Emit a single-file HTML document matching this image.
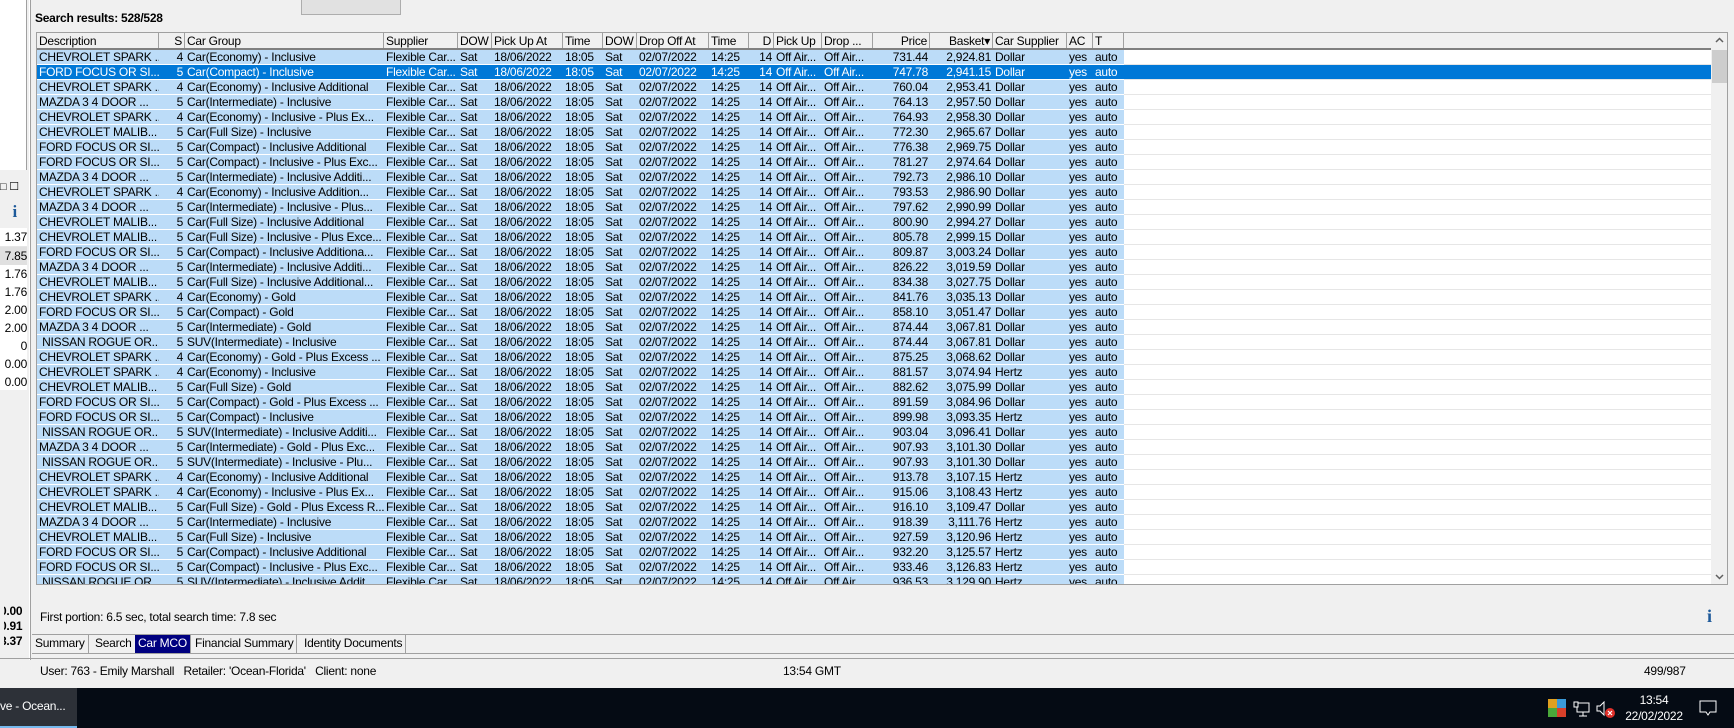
<!DOCTYPE html>
<html><head><meta charset="utf-8"><style>
*{margin:0;padding:0;box-sizing:border-box}
body{width:1734px;height:728px;overflow:hidden;background:#f0f0f0;font-family:"Liberation Sans",sans-serif;font-size:12px;color:#000;position:relative;letter-spacing:-0.25px}
.abs{position:absolute}
#grid{position:absolute;left:36px;top:32px;width:1692px;height:553px;background:#fff;border:1px solid #a0a0a0;overflow:hidden}
.h{display:flex;height:17px;background:#f0f0f0;border-bottom:2px solid #808080;width:1674px}
.h span{border-right:1px solid #a0a0a0;padding:1px 2px 0 2px;white-space:nowrap;overflow:hidden;line-height:14px}
.r{display:flex;height:15px;border-bottom:1px solid #fff;width:1674px;background:linear-gradient(to right,#bcdcf8 0 1087px,#fff 1087px);line-height:14px;position:relative}
.r::after{content:"";position:absolute;left:1087px;right:0;bottom:-1px;height:1px;background:#e6e6e6}
.r.s{background:#0078d7;color:#fff}
.r span{padding:0 2px;white-space:nowrap;overflow:hidden}
.h span:nth-child(1),.r span:nth-child(1){width:122px}
.h span:nth-child(2),.r span:nth-child(2){width:26px;text-align:right}
.h span:nth-child(3),.r span:nth-child(3){width:199px}
.h span:nth-child(4),.r span:nth-child(4){width:74px}
.h span:nth-child(5),.r span:nth-child(5){width:34px}
.h span:nth-child(6),.r span:nth-child(6){width:71px}
.h span:nth-child(7),.r span:nth-child(7){width:40px}
.h span:nth-child(8),.r span:nth-child(8){width:34px}
.h span:nth-child(9),.r span:nth-child(9){width:72px}
.h span:nth-child(10),.r span:nth-child(10){width:40px}
.h span:nth-child(11),.r span:nth-child(11){width:25px;text-align:right}
.h span:nth-child(12),.r span:nth-child(12){width:48px}
.h span:nth-child(13),.r span:nth-child(13){width:51px}
.h span:nth-child(14),.r span:nth-child(14){width:57px;text-align:right}
.h span:nth-child(15),.r span:nth-child(15){width:63px;text-align:right}
.h span:nth-child(16),.r span:nth-child(16){width:74px}
.h span:nth-child(17),.r span:nth-child(17){width:26px}
.h span:nth-child(18),.r span:nth-child(18){width:31px}
#sb{position:absolute;left:1674px;top:0;width:17px;height:553px;background:#f0f0f0}
.tab{position:absolute;top:635px;height:18px;line-height:17px;padding:0 3px;border-right:1px solid #a0a0a0}
</style></head><body>
<div class="abs" style="left:0;top:0;width:27px;height:170px;background:#fff;border-right:1px solid #a0a0a0"></div>
<div class="abs" style="left:29px;top:0;width:2px;height:660px;border-left:1px solid #fff;border-right:1px solid #a0a0a0"></div>
<div class="abs" style="left:0;top:180px;width:27px;height:18px;font-size:11px">&#9633;&nbsp;&#9744;</div>
<div class="abs" style="left:0;top:202px;width:27px;height:20px;text-align:right;padding-right:10px;font-family:'Liberation Serif',serif;font-weight:bold;color:#1e5a9a;font-size:17px">i</div>
<div class="abs" style="left:0;top:228px;width:27px;height:162px;background:#fff;text-align:right;line-height:18px;padding-top:0">
<div style="border-bottom:1px solid #e6e6e6">1.37</div><div style="background:#e0e0e0">7.85</div><div>1.76</div><div>1.76</div><div>2.00</div><div>2.00</div><div>0</div><div>0.00</div><div>0.00</div></div>
<div class="abs" style="left:0;top:604px;width:18px;text-align:right;font-weight:bold;line-height:15px">0.00<br>0.91<br>3.37</div>
<div class="abs" style="left:0;top:604px;width:4px;height:46px;background:#f0f0f0"></div>
<div class="abs" style="left:301px;top:0;width:100px;height:15px;border:1px solid #adadad;border-top:none;background:#e1e1e1"></div>
<div class="abs" style="left:35px;top:11px;font-weight:bold">Search results: 528/528</div>
<div id="grid">
<div class="h"><span>Description</span><span>S</span><span>Car Group</span><span>Supplier</span><span>DOW</span><span>Pick Up At</span><span>Time</span><span>DOW</span><span>Drop Off At</span><span>Time</span><span>D</span><span>Pick Up</span><span>Drop ...</span><span>Price</span><span>Basket&#9662;</span><span>Car Supplier</span><span>AC</span><span>T</span></div>
<div class="r"><span>CHEVROLET SPARK ...</span><span>4</span><span>Car(Economy) - Inclusive</span><span>Flexible Car...</span><span>Sat</span><span>18/06/2022</span><span>18:05</span><span>Sat</span><span>02/07/2022</span><span>14:25</span><span>14</span><span>Off Air...</span><span>Off Air...</span><span>731.44</span><span>2,924.81</span><span>Dollar</span><span>yes</span><span>auto</span></div>
<div class="r s"><span>FORD FOCUS OR SI...</span><span>5</span><span>Car(Compact) - Inclusive</span><span>Flexible Car...</span><span>Sat</span><span>18/06/2022</span><span>18:05</span><span>Sat</span><span>02/07/2022</span><span>14:25</span><span>14</span><span>Off Air...</span><span>Off Air...</span><span>747.78</span><span>2,941.15</span><span>Dollar</span><span>yes</span><span>auto</span></div>
<div class="r"><span>CHEVROLET SPARK ...</span><span>4</span><span>Car(Economy) - Inclusive Additional</span><span>Flexible Car...</span><span>Sat</span><span>18/06/2022</span><span>18:05</span><span>Sat</span><span>02/07/2022</span><span>14:25</span><span>14</span><span>Off Air...</span><span>Off Air...</span><span>760.04</span><span>2,953.41</span><span>Dollar</span><span>yes</span><span>auto</span></div>
<div class="r"><span>MAZDA 3 4 DOOR ...</span><span>5</span><span>Car(Intermediate) - Inclusive</span><span>Flexible Car...</span><span>Sat</span><span>18/06/2022</span><span>18:05</span><span>Sat</span><span>02/07/2022</span><span>14:25</span><span>14</span><span>Off Air...</span><span>Off Air...</span><span>764.13</span><span>2,957.50</span><span>Dollar</span><span>yes</span><span>auto</span></div>
<div class="r"><span>CHEVROLET SPARK ...</span><span>4</span><span>Car(Economy) - Inclusive - Plus Ex...</span><span>Flexible Car...</span><span>Sat</span><span>18/06/2022</span><span>18:05</span><span>Sat</span><span>02/07/2022</span><span>14:25</span><span>14</span><span>Off Air...</span><span>Off Air...</span><span>764.93</span><span>2,958.30</span><span>Dollar</span><span>yes</span><span>auto</span></div>
<div class="r"><span>CHEVROLET MALIB...</span><span>5</span><span>Car(Full Size) - Inclusive</span><span>Flexible Car...</span><span>Sat</span><span>18/06/2022</span><span>18:05</span><span>Sat</span><span>02/07/2022</span><span>14:25</span><span>14</span><span>Off Air...</span><span>Off Air...</span><span>772.30</span><span>2,965.67</span><span>Dollar</span><span>yes</span><span>auto</span></div>
<div class="r"><span>FORD FOCUS OR SI...</span><span>5</span><span>Car(Compact) - Inclusive Additional</span><span>Flexible Car...</span><span>Sat</span><span>18/06/2022</span><span>18:05</span><span>Sat</span><span>02/07/2022</span><span>14:25</span><span>14</span><span>Off Air...</span><span>Off Air...</span><span>776.38</span><span>2,969.75</span><span>Dollar</span><span>yes</span><span>auto</span></div>
<div class="r"><span>FORD FOCUS OR SI...</span><span>5</span><span>Car(Compact) - Inclusive - Plus Exc...</span><span>Flexible Car...</span><span>Sat</span><span>18/06/2022</span><span>18:05</span><span>Sat</span><span>02/07/2022</span><span>14:25</span><span>14</span><span>Off Air...</span><span>Off Air...</span><span>781.27</span><span>2,974.64</span><span>Dollar</span><span>yes</span><span>auto</span></div>
<div class="r"><span>MAZDA 3 4 DOOR ...</span><span>5</span><span>Car(Intermediate) - Inclusive Additi...</span><span>Flexible Car...</span><span>Sat</span><span>18/06/2022</span><span>18:05</span><span>Sat</span><span>02/07/2022</span><span>14:25</span><span>14</span><span>Off Air...</span><span>Off Air...</span><span>792.73</span><span>2,986.10</span><span>Dollar</span><span>yes</span><span>auto</span></div>
<div class="r"><span>CHEVROLET SPARK ...</span><span>4</span><span>Car(Economy) - Inclusive Addition...</span><span>Flexible Car...</span><span>Sat</span><span>18/06/2022</span><span>18:05</span><span>Sat</span><span>02/07/2022</span><span>14:25</span><span>14</span><span>Off Air...</span><span>Off Air...</span><span>793.53</span><span>2,986.90</span><span>Dollar</span><span>yes</span><span>auto</span></div>
<div class="r"><span>MAZDA 3 4 DOOR ...</span><span>5</span><span>Car(Intermediate) - Inclusive - Plus...</span><span>Flexible Car...</span><span>Sat</span><span>18/06/2022</span><span>18:05</span><span>Sat</span><span>02/07/2022</span><span>14:25</span><span>14</span><span>Off Air...</span><span>Off Air...</span><span>797.62</span><span>2,990.99</span><span>Dollar</span><span>yes</span><span>auto</span></div>
<div class="r"><span>CHEVROLET MALIB...</span><span>5</span><span>Car(Full Size) - Inclusive Additional</span><span>Flexible Car...</span><span>Sat</span><span>18/06/2022</span><span>18:05</span><span>Sat</span><span>02/07/2022</span><span>14:25</span><span>14</span><span>Off Air...</span><span>Off Air...</span><span>800.90</span><span>2,994.27</span><span>Dollar</span><span>yes</span><span>auto</span></div>
<div class="r"><span>CHEVROLET MALIB...</span><span>5</span><span>Car(Full Size) - Inclusive - Plus Exce...</span><span>Flexible Car...</span><span>Sat</span><span>18/06/2022</span><span>18:05</span><span>Sat</span><span>02/07/2022</span><span>14:25</span><span>14</span><span>Off Air...</span><span>Off Air...</span><span>805.78</span><span>2,999.15</span><span>Dollar</span><span>yes</span><span>auto</span></div>
<div class="r"><span>FORD FOCUS OR SI...</span><span>5</span><span>Car(Compact) - Inclusive Additiona...</span><span>Flexible Car...</span><span>Sat</span><span>18/06/2022</span><span>18:05</span><span>Sat</span><span>02/07/2022</span><span>14:25</span><span>14</span><span>Off Air...</span><span>Off Air...</span><span>809.87</span><span>3,003.24</span><span>Dollar</span><span>yes</span><span>auto</span></div>
<div class="r"><span>MAZDA 3 4 DOOR ...</span><span>5</span><span>Car(Intermediate) - Inclusive Additi...</span><span>Flexible Car...</span><span>Sat</span><span>18/06/2022</span><span>18:05</span><span>Sat</span><span>02/07/2022</span><span>14:25</span><span>14</span><span>Off Air...</span><span>Off Air...</span><span>826.22</span><span>3,019.59</span><span>Dollar</span><span>yes</span><span>auto</span></div>
<div class="r"><span>CHEVROLET MALIB...</span><span>5</span><span>Car(Full Size) - Inclusive Additional...</span><span>Flexible Car...</span><span>Sat</span><span>18/06/2022</span><span>18:05</span><span>Sat</span><span>02/07/2022</span><span>14:25</span><span>14</span><span>Off Air...</span><span>Off Air...</span><span>834.38</span><span>3,027.75</span><span>Dollar</span><span>yes</span><span>auto</span></div>
<div class="r"><span>CHEVROLET SPARK ...</span><span>4</span><span>Car(Economy) - Gold</span><span>Flexible Car...</span><span>Sat</span><span>18/06/2022</span><span>18:05</span><span>Sat</span><span>02/07/2022</span><span>14:25</span><span>14</span><span>Off Air...</span><span>Off Air...</span><span>841.76</span><span>3,035.13</span><span>Dollar</span><span>yes</span><span>auto</span></div>
<div class="r"><span>FORD FOCUS OR SI...</span><span>5</span><span>Car(Compact) - Gold</span><span>Flexible Car...</span><span>Sat</span><span>18/06/2022</span><span>18:05</span><span>Sat</span><span>02/07/2022</span><span>14:25</span><span>14</span><span>Off Air...</span><span>Off Air...</span><span>858.10</span><span>3,051.47</span><span>Dollar</span><span>yes</span><span>auto</span></div>
<div class="r"><span>MAZDA 3 4 DOOR ...</span><span>5</span><span>Car(Intermediate) - Gold</span><span>Flexible Car...</span><span>Sat</span><span>18/06/2022</span><span>18:05</span><span>Sat</span><span>02/07/2022</span><span>14:25</span><span>14</span><span>Off Air...</span><span>Off Air...</span><span>874.44</span><span>3,067.81</span><span>Dollar</span><span>yes</span><span>auto</span></div>
<div class="r"><span>&nbsp;NISSAN ROGUE OR...</span><span>5</span><span>SUV(Intermediate) - Inclusive</span><span>Flexible Car...</span><span>Sat</span><span>18/06/2022</span><span>18:05</span><span>Sat</span><span>02/07/2022</span><span>14:25</span><span>14</span><span>Off Air...</span><span>Off Air...</span><span>874.44</span><span>3,067.81</span><span>Dollar</span><span>yes</span><span>auto</span></div>
<div class="r"><span>CHEVROLET SPARK ...</span><span>4</span><span>Car(Economy) - Gold - Plus Excess ...</span><span>Flexible Car...</span><span>Sat</span><span>18/06/2022</span><span>18:05</span><span>Sat</span><span>02/07/2022</span><span>14:25</span><span>14</span><span>Off Air...</span><span>Off Air...</span><span>875.25</span><span>3,068.62</span><span>Dollar</span><span>yes</span><span>auto</span></div>
<div class="r"><span>CHEVROLET SPARK ...</span><span>4</span><span>Car(Economy) - Inclusive</span><span>Flexible Car...</span><span>Sat</span><span>18/06/2022</span><span>18:05</span><span>Sat</span><span>02/07/2022</span><span>14:25</span><span>14</span><span>Off Air...</span><span>Off Air...</span><span>881.57</span><span>3,074.94</span><span>Hertz</span><span>yes</span><span>auto</span></div>
<div class="r"><span>CHEVROLET MALIB...</span><span>5</span><span>Car(Full Size) - Gold</span><span>Flexible Car...</span><span>Sat</span><span>18/06/2022</span><span>18:05</span><span>Sat</span><span>02/07/2022</span><span>14:25</span><span>14</span><span>Off Air...</span><span>Off Air...</span><span>882.62</span><span>3,075.99</span><span>Dollar</span><span>yes</span><span>auto</span></div>
<div class="r"><span>FORD FOCUS OR SI...</span><span>5</span><span>Car(Compact) - Gold - Plus Excess ...</span><span>Flexible Car...</span><span>Sat</span><span>18/06/2022</span><span>18:05</span><span>Sat</span><span>02/07/2022</span><span>14:25</span><span>14</span><span>Off Air...</span><span>Off Air...</span><span>891.59</span><span>3,084.96</span><span>Dollar</span><span>yes</span><span>auto</span></div>
<div class="r"><span>FORD FOCUS OR SI...</span><span>5</span><span>Car(Compact) - Inclusive</span><span>Flexible Car...</span><span>Sat</span><span>18/06/2022</span><span>18:05</span><span>Sat</span><span>02/07/2022</span><span>14:25</span><span>14</span><span>Off Air...</span><span>Off Air...</span><span>899.98</span><span>3,093.35</span><span>Hertz</span><span>yes</span><span>auto</span></div>
<div class="r"><span>&nbsp;NISSAN ROGUE OR...</span><span>5</span><span>SUV(Intermediate) - Inclusive Additi...</span><span>Flexible Car...</span><span>Sat</span><span>18/06/2022</span><span>18:05</span><span>Sat</span><span>02/07/2022</span><span>14:25</span><span>14</span><span>Off Air...</span><span>Off Air...</span><span>903.04</span><span>3,096.41</span><span>Dollar</span><span>yes</span><span>auto</span></div>
<div class="r"><span>MAZDA 3 4 DOOR ...</span><span>5</span><span>Car(Intermediate) - Gold - Plus Exc...</span><span>Flexible Car...</span><span>Sat</span><span>18/06/2022</span><span>18:05</span><span>Sat</span><span>02/07/2022</span><span>14:25</span><span>14</span><span>Off Air...</span><span>Off Air...</span><span>907.93</span><span>3,101.30</span><span>Dollar</span><span>yes</span><span>auto</span></div>
<div class="r"><span>&nbsp;NISSAN ROGUE OR...</span><span>5</span><span>SUV(Intermediate) - Inclusive - Plu...</span><span>Flexible Car...</span><span>Sat</span><span>18/06/2022</span><span>18:05</span><span>Sat</span><span>02/07/2022</span><span>14:25</span><span>14</span><span>Off Air...</span><span>Off Air...</span><span>907.93</span><span>3,101.30</span><span>Dollar</span><span>yes</span><span>auto</span></div>
<div class="r"><span>CHEVROLET SPARK ...</span><span>4</span><span>Car(Economy) - Inclusive Additional</span><span>Flexible Car...</span><span>Sat</span><span>18/06/2022</span><span>18:05</span><span>Sat</span><span>02/07/2022</span><span>14:25</span><span>14</span><span>Off Air...</span><span>Off Air...</span><span>913.78</span><span>3,107.15</span><span>Hertz</span><span>yes</span><span>auto</span></div>
<div class="r"><span>CHEVROLET SPARK ...</span><span>4</span><span>Car(Economy) - Inclusive - Plus Ex...</span><span>Flexible Car...</span><span>Sat</span><span>18/06/2022</span><span>18:05</span><span>Sat</span><span>02/07/2022</span><span>14:25</span><span>14</span><span>Off Air...</span><span>Off Air...</span><span>915.06</span><span>3,108.43</span><span>Hertz</span><span>yes</span><span>auto</span></div>
<div class="r"><span>CHEVROLET MALIB...</span><span>5</span><span>Car(Full Size) - Gold - Plus Excess R...</span><span>Flexible Car...</span><span>Sat</span><span>18/06/2022</span><span>18:05</span><span>Sat</span><span>02/07/2022</span><span>14:25</span><span>14</span><span>Off Air...</span><span>Off Air...</span><span>916.10</span><span>3,109.47</span><span>Dollar</span><span>yes</span><span>auto</span></div>
<div class="r"><span>MAZDA 3 4 DOOR ...</span><span>5</span><span>Car(Intermediate) - Inclusive</span><span>Flexible Car...</span><span>Sat</span><span>18/06/2022</span><span>18:05</span><span>Sat</span><span>02/07/2022</span><span>14:25</span><span>14</span><span>Off Air...</span><span>Off Air...</span><span>918.39</span><span>3,111.76</span><span>Hertz</span><span>yes</span><span>auto</span></div>
<div class="r"><span>CHEVROLET MALIB...</span><span>5</span><span>Car(Full Size) - Inclusive</span><span>Flexible Car...</span><span>Sat</span><span>18/06/2022</span><span>18:05</span><span>Sat</span><span>02/07/2022</span><span>14:25</span><span>14</span><span>Off Air...</span><span>Off Air...</span><span>927.59</span><span>3,120.96</span><span>Hertz</span><span>yes</span><span>auto</span></div>
<div class="r"><span>FORD FOCUS OR SI...</span><span>5</span><span>Car(Compact) - Inclusive Additional</span><span>Flexible Car...</span><span>Sat</span><span>18/06/2022</span><span>18:05</span><span>Sat</span><span>02/07/2022</span><span>14:25</span><span>14</span><span>Off Air...</span><span>Off Air...</span><span>932.20</span><span>3,125.57</span><span>Hertz</span><span>yes</span><span>auto</span></div>
<div class="r"><span>FORD FOCUS OR SI...</span><span>5</span><span>Car(Compact) - Inclusive - Plus Exc...</span><span>Flexible Car...</span><span>Sat</span><span>18/06/2022</span><span>18:05</span><span>Sat</span><span>02/07/2022</span><span>14:25</span><span>14</span><span>Off Air...</span><span>Off Air...</span><span>933.46</span><span>3,126.83</span><span>Hertz</span><span>yes</span><span>auto</span></div>
<div class="r"><span>&nbsp;NISSAN ROGUE OR...</span><span>5</span><span>SUV(Intermediate) - Inclusive Addit...</span><span>Flexible Car...</span><span>Sat</span><span>18/06/2022</span><span>18:05</span><span>Sat</span><span>02/07/2022</span><span>14:25</span><span>14</span><span>Off Air...</span><span>Off Air...</span><span>936.53</span><span>3,129.90</span><span>Hertz</span><span>yes</span><span>auto</span></div>
<div id="sb">
<svg class="abs" style="left:4px;top:4px" width="9" height="6"><path d="M1 5 L4.5 1.5 L8 5" stroke="#606060" stroke-width="1.5" fill="none"/></svg>
<div class="abs" style="left:1px;top:17px;width:15px;height:33px;background:#cdcdcd"></div>
<svg class="abs" style="left:4px;top:541px" width="9" height="6"><path d="M1 1 L4.5 4.5 L8 1" stroke="#606060" stroke-width="1.5" fill="none"/></svg>
</div>
</div>
<div class="abs" style="left:40px;top:610px">First portion: 6.5 sec, total search time: 7.8 sec</div>
<div class="abs" style="left:1707px;top:606px;font-family:'Liberation Serif',serif;font-weight:bold;color:#1e5a9a;font-size:18px">i</div>
<div class="abs" style="left:32px;top:634px;width:1702px;height:1px;background:#a0a0a0"></div>
<div class="tab" style="left:32px">Summary</div>
<div class="tab" style="left:92px">Search</div>
<div class="tab" style="left:135px;background:#000080;color:#fff">Car MCO</div>
<div class="tab" style="left:192px">Financial Summary</div>
<div class="tab" style="left:301px">Identity Documents</div>
<div class="abs" style="left:32px;top:653px;width:1702px;height:1px;background:#a0a0a0"></div>
<div class="abs" style="left:0;top:658px;width:1734px;height:1px;background:#a0a0a0"></div>
<div class="abs" style="left:40px;top:664px">User: 763 - Emily Marshall &nbsp;&nbsp;Retailer: 'Ocean-Florida' &nbsp;&nbsp;Client: none</div>
<div class="abs" style="left:783px;top:664px">13:54 GMT</div>
<div class="abs" style="left:1644px;top:664px">499/987</div>
<div class="abs" style="left:0;top:688px;width:1734px;height:40px;background:#050b14"></div>
<div class="abs" style="left:0;top:688px;width:77px;height:40px;background:#2d3138;color:#fff;line-height:36px;padding-left:0">ve - Ocean...</div>
<div class="abs" style="left:0;top:726px;width:77px;height:2px;background:#76b9ed"></div>
<svg class="abs" style="left:1548px;top:699px" width="18" height="18"><rect x="0" y="0" width="9" height="9" fill="#e0a020"/><rect x="9" y="0" width="9" height="9" fill="#3a9ad9"/><rect x="0" y="9" width="9" height="9" fill="#4aa83a"/><rect x="9" y="9" width="9" height="9" fill="#d8402a"/></svg>
<svg class="abs" style="left:1573px;top:701px" width="17" height="16"><rect x="4" y="2" width="12" height="9" fill="none" stroke="#fff"/><rect x="1" y="1" width="4" height="5" fill="#050b14" stroke="#fff"/><path d="M10 11v4M6 15h8" stroke="#fff"/></svg>
<svg class="abs" style="left:1596px;top:701px" width="20" height="18"><path d="M1 5h3l4-4v13l-4-4H1z" fill="none" stroke="#fff"/><circle cx="14" cy="12" r="5" fill="#e0302a"/><path d="M12 10l4 4M16 10l-4 4" stroke="#fff" stroke-width="1.2"/></svg>
<div class="abs" style="left:1620px;top:692px;width:68px;text-align:center;color:#fff;line-height:16px">13:54<br>22/02/2022</div>
<svg class="abs" style="left:1699px;top:699px" width="18" height="18"><path d="M1 2h16v11h-6l-2 3-2-3H1z" fill="none" stroke="#fff"/></svg>
</body></html>
